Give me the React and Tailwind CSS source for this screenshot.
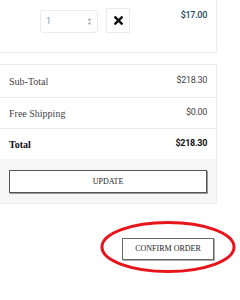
export default function App() {
  const slab = { fontFamily: '"Liberation Serif", "DejaVu Serif", serif' };
  const sans = { fontFamily: 'Roboto, "Liberation Sans", sans-serif' };
  return (
    <div className="relative w-[240px] h-[300px] bg-white overflow-hidden">
      <div className="w-[217px] h-[53px] border-r border-b border-[#ececec] flex items-start">
        <div className="ml-[40px] mt-[10px] w-[58px] h-[23px] rounded-[3px] border border-[#ebebeb] flex items-center justify-between px-[5px]">
          <span className="text-[9px] text-[#8a9ab8]" style={sans}>1</span>
          <svg width="5" height="9" viewBox="0 0 5 9">
            <path d="M0.5 3.5 L2.5 1 L4.5 3.5 Z" fill="#aaa" />
            <path d="M0.5 5.5 L2.5 8 L4.5 5.5 Z" fill="#aaa" />
          </svg>
        </div>
        <div className="ml-[8px] mt-[8px] w-[24px] h-[25px] border border-[#ebebeb] flex items-center justify-center">
          <svg width="9" height="9" viewBox="0 0 10 10">
            <path d="M1.5 1.5 L8.5 8.5 M8.5 1.5 L1.5 8.5" stroke="#111" strokeWidth="2.6" strokeLinecap="square" />
          </svg>
        </div>
        <div className="ml-auto mr-[9px] mt-[9px] text-[9px] tracking-[-0.3px] font-medium text-[#244b5c]" style={sans}>$17.00</div>
      </div>

      <div className="mt-[11px] w-[217px] border-t border-r border-b border-[#ececec]">
        <div className="h-[33px] flex items-center justify-between pl-[9px] pr-[9px] border-b border-[#ececec]">
          <span className="text-[10px] text-[#444]" style={slab}>Sub-Total</span>
          <span className="text-[9px] tracking-[-0.3px] text-[#444]" style={sans}>$218.30</span>
        </div>
        <div className="h-[31px] flex items-center justify-between pl-[9px] pr-[9px] border-b border-[#ececec]">
          <span className="text-[10px] text-[#444]" style={slab}>Free Shipping</span>
          <span className="text-[9px] tracking-[-0.3px] text-[#444]" style={sans}>$0.00</span>
        </div>
        <div className="h-[30px] flex items-center justify-between pl-[9px] pr-[9px]">
          <span className="text-[10px] font-bold text-[#111]" style={slab}>Total</span>
          <span className="text-[9px] tracking-[-0.3px] font-bold text-[#111]" style={sans}>$218.30</span>
        </div>
        <div className="h-[44px] bg-[#f6f6f6] pt-[11px] pl-[9px]">
          <div className="w-[198px] h-[23px] bg-white border border-[#555] shadow-[1px_1px_0_#999] flex items-center justify-center">
            <span className="text-[8px] text-[#222]" style={slab}>UPDATE</span>
          </div>
        </div>
      </div>

      <div className="mt-[34px] ml-[122px] w-[92px] h-[22px] border border-[#666] shadow-[1px_1px_0_#aaa] flex items-center justify-center">
        <span className="text-[8px] text-[#222]" style={slab}>CONFIRM ORDER</span>
      </div>

      <svg className="absolute left-[99px] top-[220px]" width="140" height="56" viewBox="0 0 140 56">
        <ellipse cx="69" cy="27" rx="66" ry="24.5" fill="none" stroke="#e8141c" strokeWidth="3" />
      </svg>
    </div>
  );
}
